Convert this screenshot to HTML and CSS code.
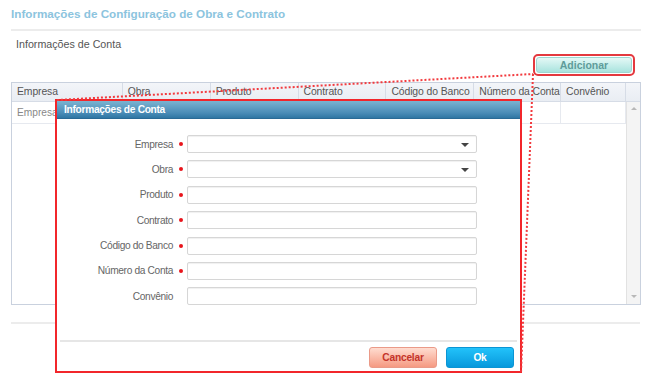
FILE: index.html
```html
<!DOCTYPE html>
<html lang="pt">
<head>
<meta charset="utf-8">
<title>Informações de Configuração de Obra e Contrato</title>
<link rel="stylesheet" href="styles.css">
</head>
<body>
<div class="page">
  <h1 class="title">Informações de Configuração de Obra e Contrato</h1>
  <div class="section-label">Informações de Conta</div>
  <div class="toolbar">
    <div class="highlight"><button class="btn-add">Adicionar</button></div>
  </div>
  <div class="grid">
    <div class="grid-head">
      <div class="hc c1">Empresa</div>
      <div class="hc c2">Obra</div>
      <div class="hc c3">Produto</div>
      <div class="hc c4">Contrato</div>
      <div class="hc c5">Código do Banco</div>
      <div class="hc c6">Número da Conta</div>
      <div class="hc c7">Convênio</div>
      <div class="hc c8"></div>
    </div>
    <div class="grid-body">
      <div class="rows">
        <div class="row">
          <div class="bc c1">Empresa</div>
          <div class="bc c2"></div>
          <div class="bc c3"></div>
          <div class="bc c4"></div>
          <div class="bc c5"></div>
          <div class="bc c6"></div>
          <div class="bc c7"></div>
        </div>
      </div>
      <div class="scrollbar">
        <span class="arrow-up"></span>
        <span class="arrow-down"></span>
      </div>
    </div>
  </div>
  <div class="bottom-rule"></div>
</div>

<div class="dialog">
  <div class="dialog-head">Informações de Conta</div>
  <div class="form">
    <div class="frow"><label>Empresa</label><span class="req"></span><div class="field select"><span class="caret"></span></div></div>
    <div class="frow"><label>Obra</label><span class="req"></span><div class="field select"><span class="caret"></span></div></div>
    <div class="frow"><label>Produto</label><span class="req"></span><div class="field"></div></div>
    <div class="frow"><label>Contrato</label><span class="req"></span><div class="field"></div></div>
    <div class="frow"><label>Código do Banco</label><span class="req"></span><div class="field"></div></div>
    <div class="frow"><label>Número da Conta</label><span class="req"></span><div class="field"></div></div>
    <div class="frow"><label>Convênio</label><span class="noreq"></span><div class="field"></div></div>
  </div>
  <div class="dialog-foot">
    <button class="btn btn-cancel">Cancelar</button>
    <button class="btn btn-ok">Ok</button>
  </div>
</div>

<svg class="callout" width="651" height="373" viewBox="0 0 651 373">
  <line x1="57" y1="100" x2="533" y2="74"/>
  <line x1="533" y1="74" x2="521" y2="373"/>
</svg>
</body>
</html>
```
FILE: styles.css
```css
* { box-sizing: border-box; }
html, body { margin: 0; padding: 0; background: #fff; }
body {
  width: 651px;
  height: 373px;
  overflow: hidden;
  position: relative;
  font-family: "Liberation Sans", Arial, sans-serif;
  font-size: 11px;
  color: #555;
}
.page { padding: 0 10px 0 11px; }
.title {
  margin: 0;
  padding: 6px 0 7px 0;
  font-size: 11.7px;
  line-height: 16px;
  font-weight: bold;
  color: #8cc4de;
  border-bottom: 2px solid #ececec;
}
.section-label {
  margin: 6px 0 0 5px;
  line-height: 14px;
  font-size: 10.7px;
  color: #555;
}
.toolbar {
  display: flex;
  justify-content: flex-end;
  margin-top: 3px;
  padding-right: 6px;
}
.highlight {
  border: 2px solid #e4393f;
  border-radius: 5px;
  padding: 1px;
  width: 102px;
  height: 22px;
}
.btn-add {
  display: block;
  width: 100%;
  height: 100%;
  border: 1px solid #9fd6d1;
  border-radius: 3px;
  background: linear-gradient(#e4f8f6, #a9e3de);
  font-family: inherit;
  font-size: 10.5px;
  font-weight: bold;
  color: #5e9c9a;
  padding: 0;
}
.grid {
  margin-top: 6px;
  width: 630px;
  border: 1px solid #c9d1de;
  height: 223px;
  display: flex;
  flex-direction: column;
}
.grid-head {
  display: flex;
  height: 19px;
  background: linear-gradient(#f3f5f9, #e9edf3);
  border-bottom: 1px solid #d6dce6;
}
.hc {
  border-right: 1px solid #d6dce6;
  line-height: 18px;
  padding-left: 5px;
  white-space: nowrap;
  overflow: hidden;
  color: #555;
  font-size: 10.4px;
  letter-spacing: -0.1px;
}
.c1 { width: 111px; }
.c2 { width: 88px; }
.c3 { width: 88px; }
.c4 { width: 88px; }
.c5 { width: 88px; }
.c6 { width: 87px; }
.c7 { width: 65px; }
.c8 { width: 14px; border-right: 0; }
.grid-body { flex: 1; display: flex; }
.rows { width: 614px; }
.row { display: flex; height: 22px; border-bottom: 1px solid #e6e9ef; }
.bc {
  border-right: 1px solid #e6e9ef;
  line-height: 21px;
  padding-left: 5px;
  color: #888;
  font-size: 10.2px;
}
.scrollbar {
  flex: 1;
  background: #f4f4f4;
  border-left: 1px solid #e2e2e2;
  position: relative;
}
.arrow-up, .arrow-down {
  position: absolute;
  left: 4px;
  width: 0; height: 0;
  border-left: 3px solid transparent;
  border-right: 3px solid transparent;
}
.arrow-up { top: 5px; border-bottom: 3px solid #b8b8b8; }
.arrow-down { bottom: 6px; border-top: 3px solid #b8b8b8; }
.bottom-rule {
  margin-top: 17px;
  width: 629px;
  border-top: 2px solid #ececec;
}

.dialog {
  position: absolute;
  left: 55px;
  top: 99px;
  width: 467px;
  height: 274px;
  border: 2px solid #f2262b;
  background: #fff;
  display: flex;
  flex-direction: column;
}
.dialog-head {
  height: 18px;
  background: linear-gradient(#7bb3d1, #4a8cb7 70%, #2f76a3);
  border-bottom: 1px solid #2a6a95;
  color: #fff;
  font-weight: bold;
  font-size: 10.2px;
  letter-spacing: -0.3px;
  line-height: 17px;
  padding-left: 7px;
}
.form {
  flex: 1;
  padding-top: 16px;
  display: flex;
  flex-direction: column;
  gap: 7.4px;
}
.frow { display: flex; align-items: center; height: 18px; }
.frow label {
  width: 116px;
  text-align: right;
  color: #666;
  font-size: 10.2px;
  letter-spacing: -0.35px;
}
.req, .noreq { width: 14px; display: flex; justify-content: center; }
.req::before {
  content: "";
  width: 4px; height: 4px;
  border-radius: 50%;
  background: #e8141b;
  margin-left: 1px;
}
.field {
  width: 290px;
  height: 18px;
  border: 1px solid #d6d6d6;
  border-radius: 2px;
  box-shadow: inset 0 1px 1px #f0f0f0;
  background: #fff;
  position: relative;
}
.caret {
  position: absolute;
  right: 7px;
  top: 7px;
  width: 0; height: 0;
  border-left: 4px solid transparent;
  border-right: 4px solid transparent;
  border-top: 4px solid #444;
}
.dialog-foot {
  margin: 0 3px;
  border-top: 2px solid #e6e6e6;
  padding: 5px 3px 3px 0;
  display: flex;
  justify-content: flex-end;
  gap: 9px;
}
.btn {
  width: 68px;
  height: 21px;
  border-radius: 3px;
  font-family: inherit;
  font-size: 10.2px;
  letter-spacing: -0.2px;
  font-weight: bold;
  padding: 0;
}
.btn-cancel {
  border: 1px solid #ea9a88;
  background: linear-gradient(#ffdcd0, #f59a82);
  color: #c4342a;
}
.btn-ok {
  border: 1px solid #0b95d4;
  background: linear-gradient(#22c2fa, #0899dc);
  color: #fff;
}
.callout {
  position: absolute;
  left: 0;
  top: 0;
  pointer-events: none;
}
.callout line {
  stroke: #f23a3e;
  stroke-width: 2;
  stroke-dasharray: 2 2;
}
```
